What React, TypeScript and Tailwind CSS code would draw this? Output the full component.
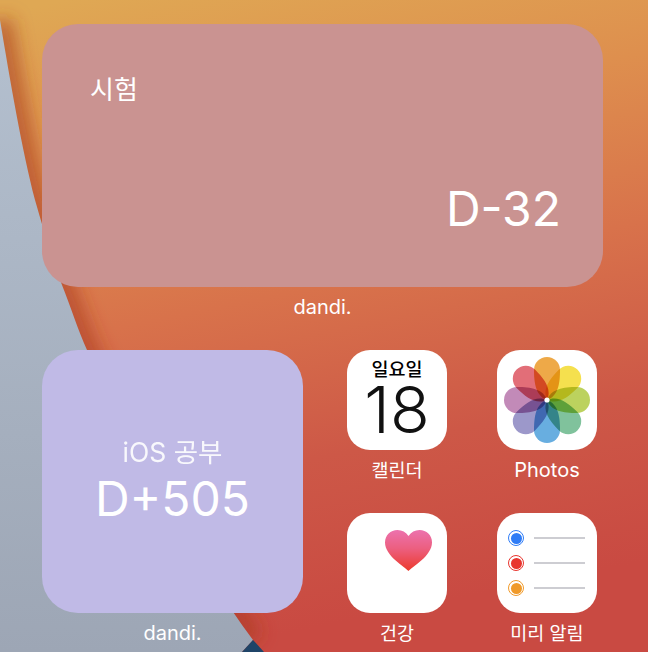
import React from "react";

const KO = "font-['Inter','Noto_Sans_CJK_KR',sans-serif]";

function Wallpaper() {
  return (
    <svg className="absolute inset-0" width="648" height="652" viewBox="0 0 648 652">
      <defs>
        <linearGradient id="bg" x1="0.1" y1="0" x2="0.3" y2="1">
          <stop offset="0" stopColor="#dfa854" />
          <stop offset="0.25" stopColor="#de8f4e" />
          <stop offset="0.5" stopColor="#d8724b" />
          <stop offset="0.75" stopColor="#cd5847" />
          <stop offset="1" stopColor="#c94a42" />
        </linearGradient>
        <linearGradient id="side" x1="0" y1="0" x2="0" y2="1">
          <stop offset="0" stopColor="#b4c0cf" />
          <stop offset="1" stopColor="#9da6b5" />
        </linearGradient>
        <filter id="blur" x="-50%" y="-10%" width="200%" height="120%">
          <feGaussianBlur stdDeviation="9" />
        </filter>
      </defs>
      <rect width="648" height="652" fill="url(#bg)" />
      <path
        d="M0 20 C 10 80 22 150 35 200 C 45 235 52 258 62 285 C 70 305 78 330 87 350 C 130 440 190 555 253 640"
        fill="none"
        stroke="#a8381f"
        strokeOpacity="0.6"
        strokeWidth="24"
        filter="url(#blur)"
      />
      <path
        d="M0 20 C 10 80 22 150 35 200 C 45 235 52 258 62 285 C 70 305 78 330 87 350 C 130 440 190 555 253 640 L242 652 L0 652 Z"
        fill="url(#side)"
      />
      <path d="M242 652 L253 640 L264 652 Z" fill="#1f4468" />
    </svg>
  );
}

function Photos() {
  const petals = [
    { a: 0, c: "#eea948" },
    { a: 45, c: "#f5e04e" },
    { a: 90, c: "#bcd25e" },
    { a: 135, c: "#80c29c" },
    { a: 180, c: "#68aee0" },
    { a: 225, c: "#9c98ca" },
    { a: 270, c: "#c28ab8" },
    { a: 315, c: "#e26e78" },
  ];
  return (
    <svg width="86" height="86" viewBox="-43 -43 86 86" className="isolate">
      {petals.map((p) => (
        <path
          key={p.a}
          d="M0 0 C -11 -4 -13 -16 -13 -30 A13 13 0 0 1 13 -30 C 13 -16 11 -4 0 0 Z"
          fill={p.c}
          style={{ mixBlendMode: "multiply" }}
          transform={`rotate(${p.a})`}
        />
      ))}
      <circle r="2.6" fill="#fff" />
    </svg>
  );
}

function Reminder({ color }: { color: string }) {
  return (
    <div className="flex items-center gap-[10px]">
      <span
        className="flex h-4 w-4 items-center justify-center rounded-full border-[1.2px]"
        style={{ borderColor: color }}
      >
        <span className="h-[11px] w-[11px] shrink-0 rounded-full" style={{ background: color }} />
      </span>
      <span className="h-[2px] w-[51px] bg-[#cdcdd2]" />
    </div>
  );
}

function AppIcon({
  label,
  size,
  children,
}: {
  label: string;
  size: string;
  children: React.ReactNode;
}) {
  return (
    <div className="flex w-[100px] flex-col items-center">
      <div className="relative h-[100px] w-[100px] overflow-hidden rounded-[23px] bg-white">
        {children}
      </div>
      <span className={`mt-[8px] whitespace-nowrap leading-[24px] text-white ${size}`}>{label}</span>
    </div>
  );
}

export default function App() {
  return (
    <div className={`relative h-[652px] w-[648px] overflow-hidden ${KO}`}>
      <Wallpaper />
      <div className="relative flex flex-col pl-[42px] pt-[24px]">
        <div className="flex h-[263px] w-[561px] flex-col justify-between rounded-[36px] bg-[#ca9391] pb-[50px] pl-[48px] pr-[42px] pt-[48px] text-white">
          <span className="text-[26px] leading-[36px]">시험</span>
          <span className="self-end text-[48px] leading-[56px]">D-32</span>
        </div>
        <div className="mt-[8px] w-[561px] text-center text-[20px] leading-[24px] text-white">dandi.</div>
        <div className="mt-[31px] flex">
          <div className="flex w-[261px] flex-col items-center">
            <div className="flex h-[263px] w-[261px] flex-col items-center justify-center rounded-[36px] bg-[#c0bae6] pb-[1px] text-white">
              <span className="text-[26.5px] leading-[34px] opacity-90">iOS 공부</span>
              <span className="mt-[1px] text-[48px] leading-[58px]">D+505</span>
            </div>
            <span className="mt-[8px] text-[20px] leading-[24px] text-white">dandi.</span>
          </div>
          <div className="ml-[44px] grid grid-cols-[100px_100px] gap-x-[50px] gap-y-[31px]">
            <AppIcon label="캘린더" size="text-[18.5px]">
              <div className="flex flex-col items-center text-black">
                <span className="mt-[9px] text-[18.5px] font-medium leading-[20px]">일요일</span>
                <span className="mt-[8px] text-[65px] font-light leading-[46px] text-[#111]">18</span>
              </div>
            </AppIcon>
            <AppIcon label="Photos" size="text-[20px]">
              <div className="flex h-full items-center justify-center">
                <Photos />
              </div>
            </AppIcon>
            <AppIcon label="건강" size="text-[18.5px]">
              <svg className="absolute left-[38px] top-[17px]" width="47" height="41" viewBox="0 0 47 41">
                <defs>
                  <linearGradient id="heart" x1="0" y1="0" x2="0" y2="1">
                    <stop offset="0" stopColor="#ec72ae" />
                    <stop offset="0.45" stopColor="#ec5f80" />
                    <stop offset="1" stopColor="#ec3a2c" />
                  </linearGradient>
                </defs>
                <path
                  d="M23.5 41 C 20 37 0 26 0 12.5 C 0 5 5.5 0 12.5 0 C 17 0 21 2 23.5 6 C 26 2 30 0 34.5 0 C 41.5 0 47 5 47 12.5 C 47 26 27 37 23.5 41 Z"
                  fill="url(#heart)"
                />
              </svg>
            </AppIcon>
            <AppIcon label="미리 알림" size="text-[18.5px]">
              <div className="flex h-full flex-col justify-center gap-[9px] pl-[11px]">
                <Reminder color="#2f7cf6" />
                <Reminder color="#e8352e" />
                <Reminder color="#f09a2a" />
              </div>
            </AppIcon>
          </div>
        </div>
      </div>
    </div>
  );
}
